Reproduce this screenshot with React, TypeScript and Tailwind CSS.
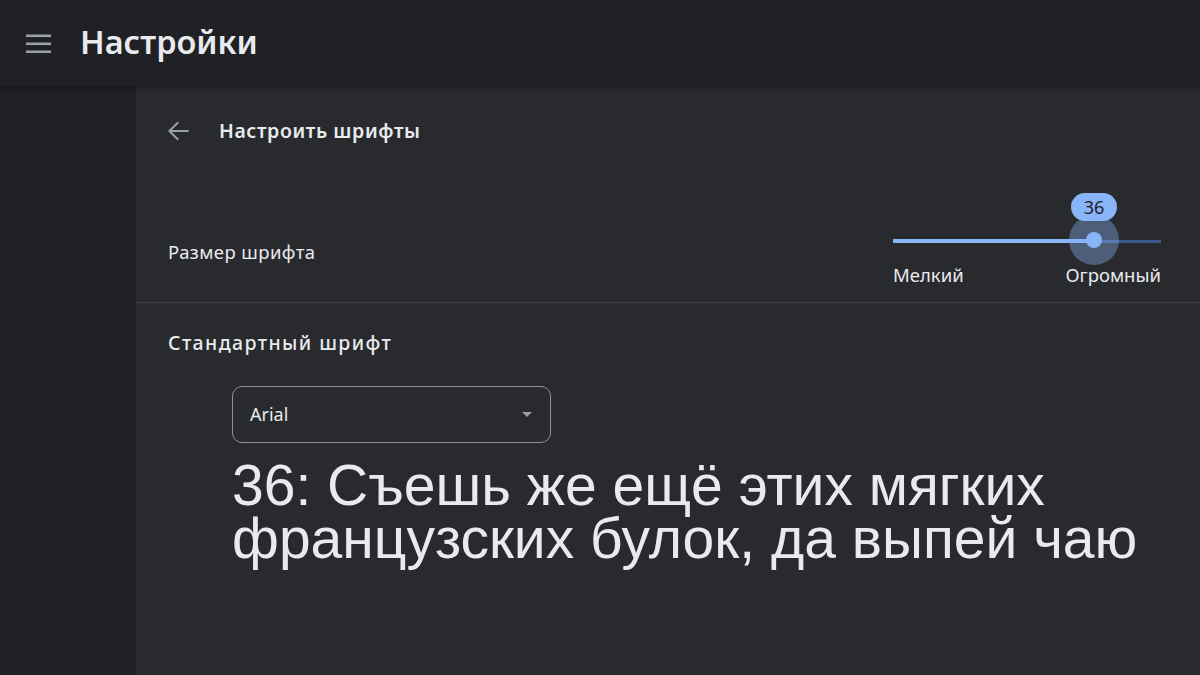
import React from "react";

export default function App() {
  const font = { fontFamily: '"Noto Sans", "Open Sans", sans-serif' };
  return (
    <div className="w-[1200px] h-[675px] flex flex-col bg-[#202124] overflow-hidden text-[#e8eaed]" style={font}>
      <header className="h-[86px] shrink-0 flex items-center bg-[#202124] relative z-10 shadow-[0_2px_6px_rgba(0,0,0,0.35)]">
        <div className="w-[80px] flex justify-center">
          <svg width="26" height="20" viewBox="0 0 26 20" className="ml-[-2px]">
            <rect x="0" y="1.5" width="25" height="2.6" fill="#9aa0a6" />
            <rect x="0" y="9.5" width="25" height="2.6" fill="#9aa0a6" />
            <rect x="0" y="17.5" width="25" height="2.6" fill="#9aa0a6" />
          </svg>
        </div>
        <h1 className="text-[32.5px] font-semibold text-[#e8eaed] mt-[-2px]">Настройки</h1>
      </header>
      <div className="flex flex-1 min-h-0">
        <aside className="w-[136px] shrink-0 bg-[#202124]" />
        <main className="flex-1 bg-[#292a2d] flex flex-col">
          <div className="h-[90px] flex items-center pl-[26px]">
            <svg width="32" height="32" viewBox="0 0 24 24" className="shrink-0">
              <path d="M20 11.25H7.4l5.3-5.3-1.06-1.06L4.5 12l7.14 7.11 1.06-1.06-5.3-5.3H20v-1.5z" fill="#9aa0a6" />
            </svg>
            <span className="ml-[25px] text-[19.5px] font-semibold tracking-[0.6px] text-[#e8eaed]">Настроить шрифты</span>
          </div>
          <div className="h-[127px] border-b border-[#3f4043] flex justify-between pl-[32px] pr-[39px]">
            <div className="mt-[64px] text-[18.5px] leading-[24px] tracking-[0.4px] text-[#e8eaed]">Размер шрифта</div>
            <div className="mt-[17px] w-[268px] relative h-[100px]">
              <div className="absolute left-0 right-0 top-[47px] h-[3px] bg-[#3d5a8f]" />
              <div className="absolute left-0 w-[201px] top-[46px] h-[4px] bg-[#8ab4f8]" />
              <div className="absolute left-[176px] top-[22px] w-[50px] h-[50px] rounded-full bg-[rgba(138,180,248,0.38)]" />
              <div className="absolute left-[193px] top-[39px] w-[16px] h-[16px] rounded-full bg-[#8ab4f8]" />
              <div className="absolute left-[178px] top-0 w-[46px] h-[28px] rounded-full bg-[#8ab4f8] flex items-center justify-center text-[18px] text-[#202124]">36</div>
              <div className="absolute left-0 top-[70px] text-[18.5px] leading-[24px] text-[#e8eaed]">Мелкий</div>
              <div className="absolute right-0 top-[70px] text-[18.5px] leading-[24px] text-[#e8eaed]">Огромный</div>
            </div>
          </div>
          <div className="pl-[32px] pt-[28px]">
            <div className="text-[19.5px] leading-[24px] font-medium tracking-[1.4px] text-[#e8eaed]">Стандартный шрифт</div>
            <div className="ml-[64px] mt-[31px] w-[319px] h-[57px] rounded-[10px] border border-[#8e9196] flex items-center justify-between pl-[17px] pr-[18px]">
              <span className="text-[18px] text-[#e8eaed]">Arial</span>
              <svg width="10" height="5" viewBox="0 0 10 5"><path d="M0 0h10L5 5z" fill="#9aa0a6" /></svg>
            </div>
            <div
              className="ml-[64px] mt-[16px] text-[57px] leading-[53px] text-[#e8eaed]"
              style={{ fontFamily: '"Liberation Sans", Arial, sans-serif' }}
            >
              36: Съешь же ещё этих мягких
              <br />
              французских булок, да выпей чаю
            </div>
          </div>
        </main>
      </div>
    </div>
  );
}
